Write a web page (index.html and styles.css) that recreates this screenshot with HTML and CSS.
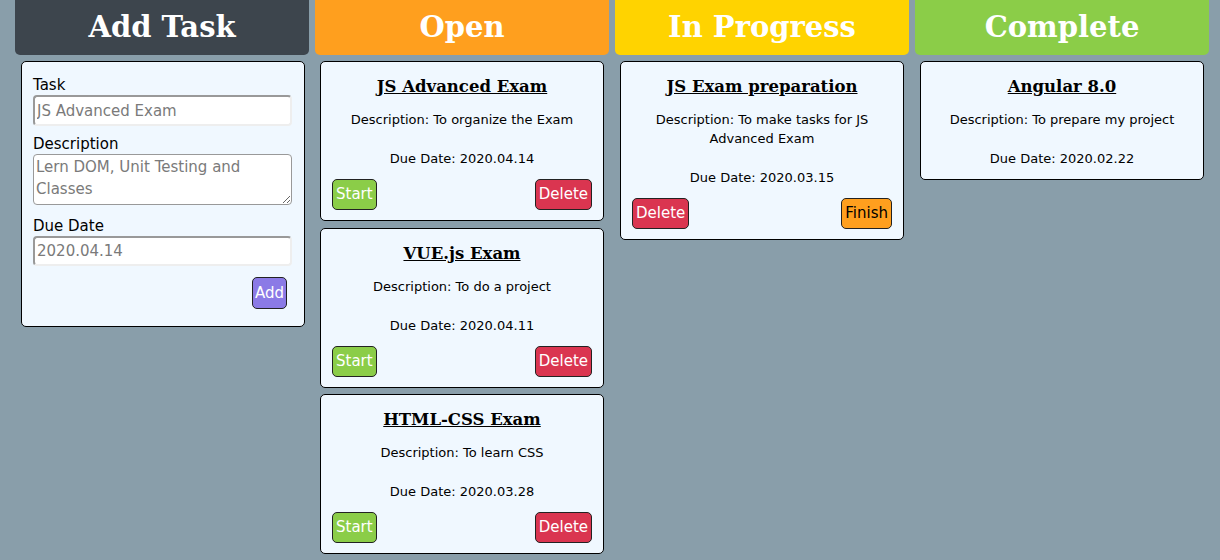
FILE: index.html
```html
<!DOCTYPE html>
<html lang="en">
<head>
<meta charset="utf-8">
<title>Task Manager</title>
<link rel="stylesheet" href="styles.css">
</head>
<body>
<main class="board">
  <section class="column">
    <h1 class="col-head head-dark">Add Task</h1>
    <form class="card add-card">
      <label class="field-label" for="task">Task</label>
      <input class="field" id="task" type="text" placeholder="JS Advanced Exam">
      <label class="field-label label-desc" for="description">Description</label>
      <textarea class="field field-area" id="description" placeholder="Lern DOM, Unit Testing and Classes"></textarea>
      <label class="field-label label-date" for="date">Due Date</label>
      <input class="field field-date" id="date" type="text" placeholder="2020.04.14">
      <div class="add-row"><button type="button" class="btn btn-add">Add</button></div>
    </form>
  </section>

  <section class="column">
    <h1 class="col-head head-orange">Open</h1>
    <article class="card task">
      <h3 class="task-title">JS Advanced Exam</h3>
      <p class="task-desc">Description: To organize the Exam</p>
      <p class="task-date">Due Date: 2020.04.14</p>
      <div class="actions"><button class="btn btn-green">Start</button><button class="btn btn-red">Delete</button></div>
    </article>
    <article class="card task">
      <h3 class="task-title">VUE.js Exam</h3>
      <p class="task-desc">Description: To do a project</p>
      <p class="task-date">Due Date: 2020.04.11</p>
      <div class="actions"><button class="btn btn-green">Start</button><button class="btn btn-red">Delete</button></div>
    </article>
    <article class="card task">
      <h3 class="task-title">HTML-CSS Exam</h3>
      <p class="task-desc">Description: To learn CSS</p>
      <p class="task-date">Due Date: 2020.03.28</p>
      <div class="actions"><button class="btn btn-green">Start</button><button class="btn btn-red">Delete</button></div>
    </article>
  </section>

  <section class="column">
    <h1 class="col-head head-yellow">In Progress</h1>
    <article class="card task">
      <h3 class="task-title">JS Exam preparation</h3>
      <p class="task-desc">Description: To make tasks for JS Advanced Exam</p>
      <p class="task-date">Due Date: 2020.03.15</p>
      <div class="actions"><button class="btn btn-red">Delete</button><button class="btn btn-orange">Finish</button></div>
    </article>
  </section>

  <section class="column">
    <h1 class="col-head head-green">Complete</h1>
    <article class="card task task-done">
      <h3 class="task-title">Angular 8.0</h3>
      <p class="task-desc">Description: To prepare my project</p>
      <p class="task-date">Due Date: 2020.02.22</p>
    </article>
  </section>
</main>
</body>
</html>
```

FILE: styles.css
```css
* { box-sizing: border-box; }

html, body {
  margin: 0;
  padding: 0;
  background: #899eaa;
  height: 100%;
}

body {
  font-family: "DejaVu Sans", Verdana, sans-serif;
  color: #000;
  overflow: hidden;
}

.board {
  display: grid;
  grid-template-columns: repeat(4, 294px);
  column-gap: 6px;
  align-items: start;
  padding-left: 15px;
}

.column {
  display: flex;
  flex-direction: column;
  gap: 6.5px;
}

.col-head {
  margin: 0 0 -0.5px;
  height: 55px;
  border-radius: 0 0 5px 5px;
  font-family: "DejaVu Serif", Georgia, serif;
  font-weight: bold;
  font-size: 29px;
  line-height: 54px;
  text-align: center;
  color: #fff;
}

.head-dark { background: #3d454d; }
.head-orange { background: #ff9f1e; }
.head-yellow { background: #ffd300; }
.head-green { background: #8bcd48; }

.card {
  margin: 0 5px;
  background: #f0f8ff;
  border: 1px solid #000;
  border-radius: 5px;
}

/* Add task form */
.add-card {
  display: flex;
  flex-direction: column;
  padding: 14px 12px 17px 11px;
  margin-left: 6px;
  margin-right: 4px;
}

.field-label {
  font-size: 15px;
  line-height: 18px;
}

.label-desc { margin-top: 9px; }
.label-date { margin-top: 12px; }

.field {
  display: block;
  width: 100%;
  margin-top: 1px;
  height: 31px;
  padding: 2px 2px;
  font-family: "DejaVu Sans", Verdana, sans-serif;
  font-size: 15px;
  background: #fff;
  border: 2px solid;
  border-color: #999 #eee #eee #999;
  border-radius: 4px;
}

.field-date { height: 30px; }

.field::placeholder { color: #7a7a7a; opacity: 1; }

.field-area {
  height: 51px;
  margin-top: 1px;
  line-height: 22px;
  padding: 1px 2px;
  resize: vertical;
  border-color: #999;
  border-width: 1px;
  border-radius: 4px;
}

.add-row {
  display: flex;
  justify-content: flex-end;
  margin-top: 11px;
  padding-right: 5px;
}

/* Buttons */
.btn {
  font-family: "DejaVu Sans", Verdana, sans-serif;
  font-size: 15px;
  line-height: 19px;
  padding: 5px 3px;
  height: 31px;
  border: 1px solid #222;
  border-radius: 5px;
  color: #fff;
  cursor: pointer;
}

.btn-add { background: #8b7ae6; padding: 5px 2px; height: 32px; }
.btn-green { background: #8bcd48; }
.btn-red { background: #da3550; }
.btn-orange { background: #ff9f1e; color: #000; }

/* Task cards */
.task {
  padding: 13px 11px 10px 11px;
  text-align: center;
}

.task-title {
  margin: 0;
  font-family: "DejaVu Serif", Georgia, serif;
  font-weight: bold;
  font-size: 16.5px;
  line-height: 24px;
  text-decoration: underline;
}

.task-desc {
  margin: 11px 0 0;
  font-size: 13px;
  line-height: 19px;
}

.task-date {
  margin: 20px 0 0;
  font-size: 13px;
  line-height: 19px;
}

.task-done { padding-bottom: 11px; }

.actions {
  display: flex;
  justify-content: space-between;
  margin-top: 11px;
}
```
